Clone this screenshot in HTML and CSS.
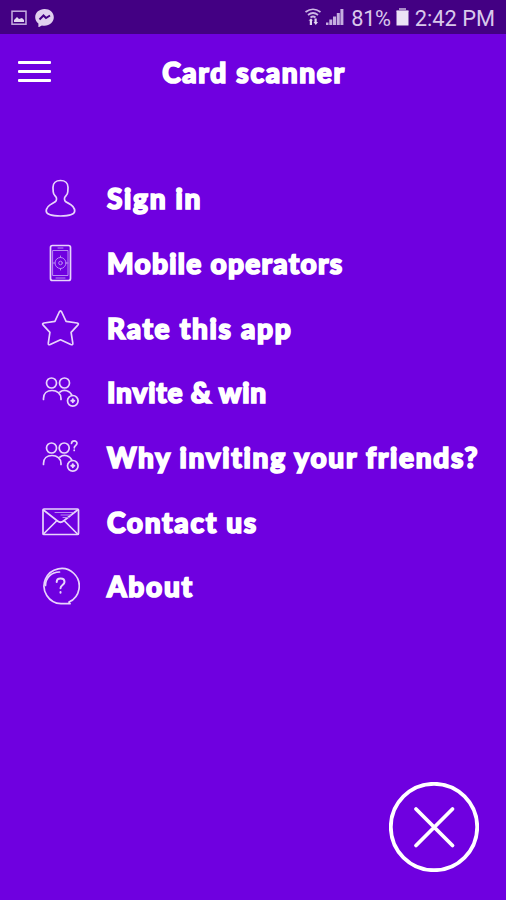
FILE: index.html
```html
<!DOCTYPE html>
<html lang="en">
<head>
  <meta charset="UTF-8" />
  <meta name="viewport" content="width=device-width, initial-scale=1.0"/>
  <title>Card scanner</title>
  <link rel="stylesheet" href="styles.css">
</head>
<body>
  <div class="status-bar">
    <svg class="notif" width="44" height="20" viewBox="0 0 44 20">
      <rect x="1" y="4.200" width="14" height="13" fill="none" stroke="#c5aee0" stroke-width="1.5"/>
      <path d="M3 15v-2l3-3 2 2 3-1 2 2v2z" fill="#e3d6f1"/>
      <path d="M33.500 2c-5.200 0-9.300 3.600-9.300 8.200 0 2.600 1.200 4.700 3.200 6.200v4l3.500-2c.8.200 1.700.3 2.600.3 5.200 0 9.300-3.800 9.300-8.500S38.700 2 33.500 2z" fill="#e0d0ef"/>
      <path d="M28.500 12.500l4-4 2.500 2.500 4-2.500" fill="none" stroke="#430083" stroke-width="2"/>
    </svg>
    <div class="status-right">
      <svg class="wifi" width="18" height="20" viewBox="0 0 18 20">
        <g fill="none" stroke="#cdb8e4" stroke-width="1.7">
          <path d="M1.500 5q7.500-5.500 15 0M4 8q5-4 10 0M6.500 10.500q2.500-2 5 0"/>
        </g>
        <path d="M4.500 13.500l2.500-2 2 2H8V18H5.800v-4.500zM9.500 15h1v-3.500h2.200V15H14l-2.200 3z" fill="#e3d6f1"/>
      </svg>
      <svg class="signal" width="20" height="18" viewBox="0 0 20 18">
        <path d="M1 14.500h2.500V17H1zM4.300 11.500h3V17h-3zM8 8.500h3.100V17H8zM11.800 5h3v12h-3zM15.400 1h3v16h-3z" fill="#c5aee0"/>
      </svg>
      <span class="percent">81%</span>
      <svg class="battery" width="13" height="18" viewBox="0 0 13 18">
        <path d="M3 0h7v2h2.500v2H.5V2H3z" fill="#a98bc8"/>
        <path d="M.5 3h12v14.500H.5z" fill="#ece3f6"/>
      </svg>
      <span class="time">2:42 PM</span>
    </div>
  </div>

  <header class="header">
    <button class="hamburger" aria-label="Menu"><i></i><i></i><i></i></button>
    <h1>Card scanner</h1>
  </header>

  <nav class="menu">
    <a class="item">
      <svg viewBox="0 0 40 40">
        <path d="M20.500 1.500c-4.600 0-7.500 2.700-7.500 6.800 0 2 .2 3 .2 4.500 0 2.400 1.500 3.700 2.800 5.200.8 1 .7 3.500-.5 4.500-2.700 2.200-9.300 3.300-9.300 9.600 0 3.500 4.500 4.900 14.300 4.900s14.200-1.400 14.200-4.900c0-6.300-6.500-7.400-9.200-9.600-1.200-1-1.300-3.500-.5-4.500 1.300-1.500 2.800-2.800 2.800-5.200 0-1.500.2-2.500.2-4.500 0-4.100-2.900-6.800-7.500-6.800z"/>
      </svg>
      <span>Sign in</span>
    </a>
    <a class="item long">
      <svg viewBox="0 0 40 40">
        <rect x="10.500" y="1.500" width="20" height="35" rx="2"/>
        <g class="thin">
          <rect x="13" y="6.500" width="15" height="25"/>
          <path d="M18 4h5M16 34h9"/>
          <circle cx="20.500" cy="19" r="5.500"/>
          <circle cx="20.500" cy="19" r="1.800"/>
          <path d="M13 19h2M26 19h2M20.500 12v1.500M20.500 24.500v1.500"/>
        </g>
      </svg>
      <span>Mobile operators</span>
    </a>
    <a class="item">
      <svg viewBox="0 0 40 40">
        <path d="M19.300 3q1.200-2.200 2.400 0l4.400 9.300 11 1.700q2.200.5.700 2.100l-6.700 7.200 1.700 10.800q.2 2.300-2 1.400l-10.300-4.700-10.300 4.700q-2.100.9-1.900-1.400l1.600-10.800-6.700-7.200q-1.500-1.600.8-2.100l10.900-1.700z"/>
      </svg>
      <span>Rate this app</span>
    </a>
    <a class="item tight">
      <svg viewBox="0 0 40 40">
        <circle cx="11.500" cy="10" r="5"/>
        <circle cx="24.500" cy="10" r="5"/>
        <path d="M3.500 26.500v-1c0-5 3.500-8 8.500-8s9 3 9 8v1M20 19c4-3 10-1.500 12 3.500"/>
        <circle cx="32.800" cy="27.800" r="5.300"/>
        <path class="bold" d="M31.300 27.800h3M32.800 26.300v3"/>
      </svg>
      <span>Invite &amp; win</span>
    </a>
    <a class="item">
      <svg viewBox="0 0 40 40">
        <circle cx="11.500" cy="10" r="5"/>
        <circle cx="24.200" cy="10" r="5"/>
        <path d="M3.500 26.500v-1c0-5 3.500-8 8.500-8s9 3 9 8v1M20 19c4-3 10-1.500 12 3.500"/>
        <circle cx="32.800" cy="27.800" r="5.300"/>
        <path class="bold" d="M31.300 27.800h3M32.800 26.300v3"/>
        <path d="M31.500 5.500c.3-3.400 5.500-3.300 5.500-.2 0 2.300-2.700 2.500-2.700 4.500M34.200 12v.5"/>
      </svg>
      <span>Why inviting your friends?</span>
    </a>
    <a class="item">
      <svg viewBox="0 0 40 40">
        <rect x="3" y="6" width="35.500" height="25.500" rx="1"/>
        <path d="M3.500 7l14 11q3 2.500 6 0l14-11M3.500 31l12.500-12.500M37.500 31L25 18.500"/>
        <path class="thin" d="M15 9.500h18M21 12h10M23 14.500h6"/>
      </svg>
      <span>Contact us</span>
    </a>
    <a class="item">
      <svg viewBox="0 0 40 40">
        <path d="M30 36.700q-.8-.8-1-1.600A17.600 17.600 0 1 0 21 36.700h9"/>
        <path d="M5.500 18.500c0-7.500 6-13.500 14-13.500"/>
        <path class="bold" d="M16.700 15c0-4.600 7.800-4.600 7.800 0 0 3-4 3-4 6.200M20.500 25v.8"/>
      </svg>
      <span>About</span>
    </a>
  </nav>

  <button class="close" aria-label="Close">
    <svg width="90" height="90" viewBox="0 0 90 90">
      <circle cx="45" cy="45" r="43.200"/>
      <path d="M27 27l36.500 36.500M63.500 27L27 63.500"/>
    </svg>
  </button>
</body>
</html>
```
FILE: styles.css
```css
:root {
  --bg: #6f00e0;
  --bar: #430083;
  --text: #ffffff;
  --line: #e8d4fc;
}

* {
  box-sizing: border-box;
}

body {
  margin: 0;
  height: 100vh;
  background: var(--bg);
  color: var(--text);
  font-family: Lato, "Open Sans", sans-serif;
  display: flex;
  flex-direction: column;
  overflow: hidden;
}

button {
  padding: 0;
  border: none;
  background: none;
  color: inherit;
}

svg {
  display: block;
  flex: none;
}

.status-bar {
  height: 34px;
  flex: none;
  padding: 0 11px 0 11px;
  background: var(--bar);
  color: #d9c8eb;
  font-family: Roboto, sans-serif;
  font-size: 21.800px;
  line-height: 34px;
  display: flex;
  justify-content: space-between;
  align-items: center;
}

.status-right {
  display: flex;
  align-items: center;
}

.signal {
  margin: 0 6px 0 3px;
}

.percent {
  margin-top: 4px;
  letter-spacing: -0.3px;
}

.battery {
  margin: 0 6px 0 5px;
}

.time {
  margin-top: 4px;
}

.header {
  height: 78px;
  flex: none;
  display: grid;
  grid-template-columns: 69px 1fr 69px;
}

.hamburger {
  display: flex;
  flex-direction: column;
  gap: 6px;
  align-self: start;
  margin: 27px 0 0 18px;
  width: 33px;
}

.hamburger i {
  height: 3px;
  border-radius: 1px;
  background: var(--text);
}

h1,
.item {
  font-size: 28px;
  font-weight: 900;
  letter-spacing: 1.700px;
  white-space: nowrap;
  -webkit-text-stroke: 1.700px var(--text);
}

h1 {
  margin: 0;
  padding-left: 2px;
  text-align: center;
  line-height: 76px;
}

.menu {
  margin-top: 55px;
  display: flex;
  flex-direction: column;
}

.item {
  height: 64.700px;
  padding-left: 40px;
  display: flex;
  align-items: center;
  gap: 27px;
}

.item span {
  padding-bottom: 2px;
}

.item.long {
  letter-spacing: 1.300px;
}

.item.tight {
  letter-spacing: 0.800px;
}

.item svg {
  width: 40px;
  height: 40px;
  fill: none;
  stroke: var(--line);
  stroke-width: 1.700;
  stroke-linecap: round;
  stroke-linejoin: round;
}

.item .thin {
  stroke-width: 1;
  stroke: #b98af2;
}

.item .bold {
  stroke-width: 2;
}

.close {
  margin: auto 27px 28px auto;
}

.close svg {
  fill: none;
  stroke: var(--text);
  stroke-width: 3.800;
  stroke-linecap: round;
}
```
